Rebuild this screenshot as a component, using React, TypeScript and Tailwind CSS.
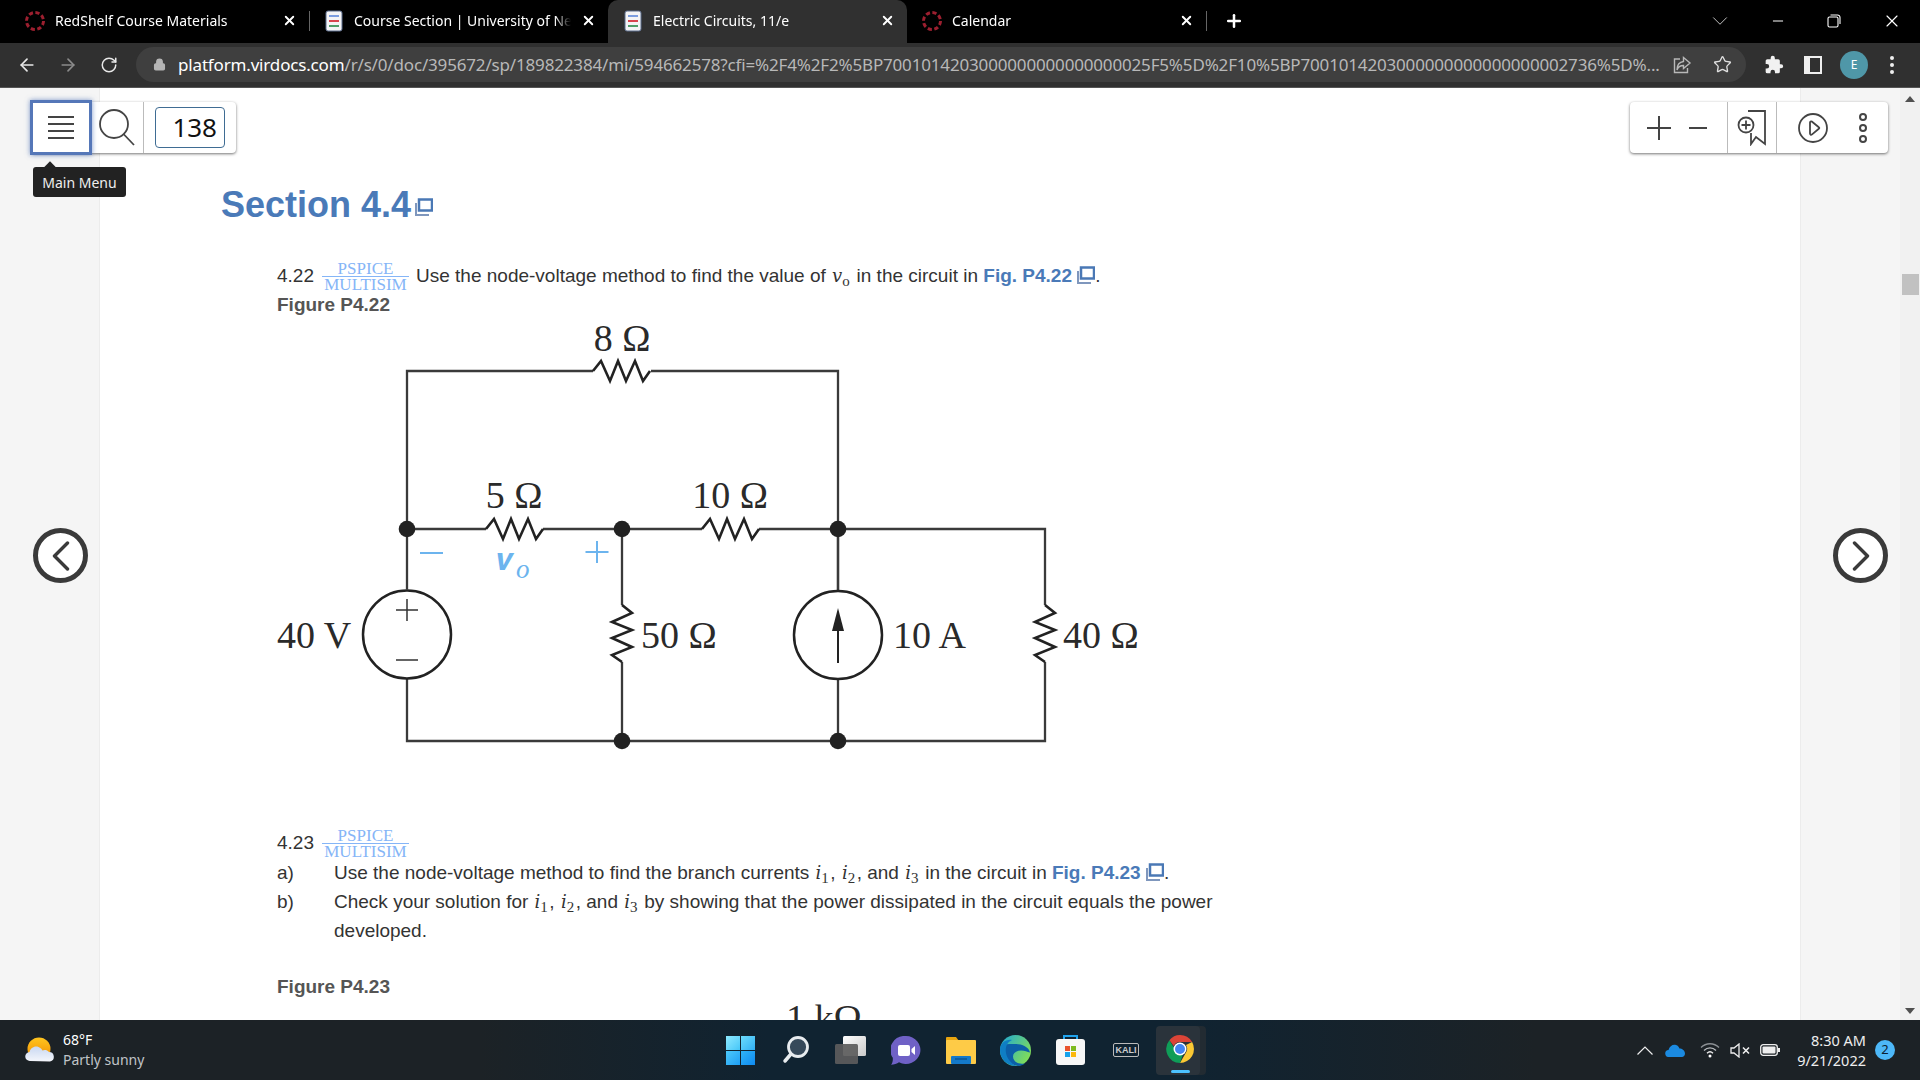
import type { ReactNode } from 'react';
import {
  ArrowLeft,
  ArrowRight,
  ChevronDown,
  Lock,
  Minus,
  Plus,
  RotateCw,
  Star,
  X,
} from 'lucide-react';

const CHROME_FONT = "font-['Noto_Sans',sans-serif]";
const READER_FONT = "font-['Liberation_Sans',Arial,sans-serif]";

function RedShelfIcon() {
  return (
    <svg width="22" height="22" viewBox="0 0 22 22" className="shrink-0">
      <circle cx="11" cy="11" r="8.5" fill="none" stroke="#9c1f2f" strokeWidth="3" strokeDasharray="4.2 2.5" />
    </svg>
  );
}

function DocIcon() {
  return (
    <svg width="18" height="22" viewBox="0 0 18 22" className="shrink-0">
      <rect x="1" y="1" width="16" height="20" rx="2" fill="#f4f4f6" stroke="#5b6c8c" />
      <rect x="4" y="5" width="10" height="2" fill="#7c9de0" />
      <rect x="4" y="10" width="10" height="2" fill="#d9434e" />
      <rect x="4" y="15" width="10" height="2" fill="#4f9d69" />
    </svg>
  );
}

function Tab({ title, icon, active, divider }: { title: string; icon: ReactNode; active?: boolean; divider?: boolean }) {
  return (
    <div
      className={[
        'relative flex h-full w-[299px] items-center pb-[2px] pl-[14px] pr-[12px]',
        active ? 'rounded-t-[10px] bg-[#303030]' : '',
      ].join(' ')}
    >
      <div className="flex w-[22px] shrink-0 justify-center">{icon}</div>
      <span className="ml-[9px] min-w-0 flex-1 overflow-hidden whitespace-nowrap text-[14px] text-white [mask-image:linear-gradient(to_left,transparent,black_16px)]">
        {title}
      </span>
      <X size={15} strokeWidth={3} className="ml-[10px] shrink-0 text-white" />
      {divider ? <div className="absolute -right-px top-[11px] h-[20px] w-px bg-[#666]" /> : null}
    </div>
  );
}

function TabBar() {
  return (
    <div className={`flex h-[43px] shrink-0 items-end bg-black ${CHROME_FONT}`}>
      <div className="flex h-[43px] pl-[10px]">
        <Tab title="RedShelf Course Materials" icon={<RedShelfIcon />} divider />
        <Tab title="Course Section | University of New Hampshire" icon={<DocIcon />} />
        <Tab title="Electric Circuits, 11/e" icon={<DocIcon />} active />
        <Tab title="Calendar" icon={<RedShelfIcon />} divider />
      </div>
      <div className="flex h-full flex-1 items-center pb-[2px] pl-[18px] pr-[18px] text-white">
        <Plus size={20} strokeWidth={3} />
        <ChevronDown size={26} strokeWidth={0.8} className="ml-auto text-[#ddd]" />
        <Minus size={16} strokeWidth={1.5} className="ml-[37px]" />
        <svg width="14" height="14" viewBox="0 0 14 14" className="ml-[41px]" fill="none" stroke="white" strokeWidth="1.1">
          <rect x="1" y="3" width="10" height="10" rx="1.5" />
          <path d="M3.5 1h7a2.5 2.5 0 0 1 2.5 2.5V10" />
        </svg>
        <X size={20} strokeWidth={1.4} className="ml-[41px]" />
      </div>
    </div>
  );
}

function AddressBar() {
  return (
    <div className={`flex h-[45px] shrink-0 items-center border-b border-[#555] bg-[#303030] pb-px ${CHROME_FONT}`}>
      <div className="flex items-center pl-[17px] text-[#e8e8e8]">
        <ArrowLeft size={20} strokeWidth={2} />
        <ArrowRight size={20} strokeWidth={2} className="ml-[21px] text-[#8b8b8b]" />
        <RotateCw size={18} strokeWidth={2} className="ml-[22px]" />
      </div>
      <div className="ml-[18px] flex h-[35px] w-[1610px] items-center rounded-full bg-[#3f3f3f] pl-[17px] pr-[14px]">
        <Lock size={13} strokeWidth={2.5} className="shrink-0 fill-[#b5b5b5] text-[#b5b5b5]" />
        <div className="ml-[12px] min-w-0 flex-1 overflow-hidden whitespace-nowrap text-[17px] tracking-[-0.165px] text-[#b8b8b8]">
          <span className="text-white">platform.virdocs.com</span>
          /r/s/0/doc/395672/sp/189822384/mi/594662578?cfi=%2F4%2F2%5BP7001014203000000000000000025F5%5D%2F10%5BP7001014203000000000000000002736%5D%...
        </div>
        <svg width="20" height="20" viewBox="0 0 20 20" className="ml-[12px] shrink-0" fill="none" stroke="#b8b8b8" strokeWidth="1.4">
          <path d="M8 4H2.5v13.5h13V13" />
          <path d="M11.5 2.5 18 8l-6.5 5.5V10.5C8 10.5 6 12 5 15c0-5 2.5-8 6.5-8.5z" />
        </svg>
        <Star size={19} strokeWidth={1.7} className="ml-[21px] shrink-0 text-[#e0e0e0]" />
      </div>
      <svg width="20" height="20" viewBox="0 0 24 24" className="ml-[18px] shrink-0" fill="#f1f1f1">
        <path d="M20.5 11H19V7a2 2 0 0 0-2-2h-4V3.5a2.5 2.5 0 0 0-5 0V5H4a2 2 0 0 0-2 2v3.8h1.5a2.7 2.7 0 0 1 0 5.4H2V20a2 2 0 0 0 2 2h3.8v-1.5a2.7 2.7 0 0 1 5.4 0V22H17a2 2 0 0 0 2-2v-4h1.5a2.5 2.5 0 0 0 0-5z" />
      </svg>
      <div className="ml-[20px] flex h-[18px] w-[18px] shrink-0 justify-end border-[2px] border-[#eee] bg-[#eee]">
        <div className="h-full w-[10px] bg-[#303030]" />
      </div>
      <div className="ml-[18px] flex h-[28px] w-[28px] shrink-0 items-center justify-center rounded-full bg-[#4f97a8] text-[12px] text-white">
        E
      </div>
      <div className="ml-[22px] flex flex-col gap-[3px]">
        <span className="h-[4px] w-[4px] rounded-full bg-[#eee]" />
        <span className="h-[4px] w-[4px] rounded-full bg-[#eee]" />
        <span className="h-[4px] w-[4px] rounded-full bg-[#eee]" />
      </div>
    </div>
  );
}

function LeftTools() {
  return (
    <div className="absolute left-[32px] top-[14px] flex h-[51px] w-[204px] rounded-[4px] bg-white shadow-[0_1px_3px_rgba(0,0,0,0.55)]">
      <div className="flex w-[58px] items-center justify-center outline-[3px] -outline-offset-1 outline-[#5577b8] [box-shadow:0_0_5px_2px_rgba(74,111,181,0.7)]">
        <div className="flex w-[26px] flex-col gap-[5px]">
          <span className="h-[2px] bg-[#444]" />
          <span className="h-[2px] bg-[#444]" />
          <span className="h-[2px] bg-[#444]" />
          <span className="h-[2px] bg-[#444]" />
        </div>
      </div>
      <div className="flex w-[54px] items-center justify-center border-r border-[#bbb]">
        <svg width="38" height="38" viewBox="0 0 38 38" fill="none" stroke="#444" strokeWidth="1.8">
          <circle cx="16" cy="15" r="14" />
          <path d="m25.5 25 10.5 11" />
        </svg>
      </div>
      <div className="ml-[11px] flex h-[41px] w-[70px] items-center justify-end self-center rounded-[4px] border border-[#3f6c93] pr-[7px] font-['Noto_Sans',sans-serif] text-[26px] text-[#111]">
        138
      </div>
    </div>
  );
}

function Tooltip() {
  return (
    <div className="absolute left-[33px] top-[79px] flex h-[30px] w-[93px] items-center justify-center rounded-[3px] bg-[#222] font-['Noto_Sans',sans-serif] text-[14px] text-[#eee]">
      <span className="absolute -top-[4px] left-[13px] h-[8px] w-[8px] rotate-45 bg-[#222]" />
      Main Menu
    </div>
  );
}

function RightTools() {
  return (
    <div className="absolute left-[1630px] top-[14px] flex h-[51px] w-[258px] rounded-[4px] bg-white text-[#444] shadow-[0_1px_3px_rgba(0,0,0,0.55)]">
      <div className="flex w-[98px] items-center border-r border-[#bbb] pl-[16px]">
        <svg width="26" height="26" viewBox="0 0 26 26" stroke="#444" strokeWidth="2">
          <path d="M13 1v24M1 13h24" />
        </svg>
        <svg width="18" height="4" viewBox="0 0 18 4" className="ml-[17px]" stroke="#444" strokeWidth="2">
          <path d="M0 2h18" />
        </svg>
      </div>
      <div className="flex w-[49px] items-center justify-center border-r border-[#bbb]">
        <svg width="30" height="36" viewBox="0 0 30 36" fill="none" stroke="#444" strokeWidth="1.8">
          <path d="M11 1h17v33l-9-7-5 7V23" />
          <circle cx="9" cy="15" r="7.5" fill="white" />
          <path d="M9 10.5v9M4.5 15h9" />
        </svg>
      </div>
      <div className="flex flex-1 items-center pl-[21px]">
        <svg width="30" height="30" viewBox="0 0 30 30" fill="none" stroke="#444" strokeWidth="1.8">
          <circle cx="15" cy="15" r="14" />
          <path d="M12 9.5c0-1 1-1.5 1.8-1l7 5.8c.7.5.7 1 0 1.5l-7 5.8c-.8.5-1.8 0-1.8-1z" />
        </svg>
        <div className="ml-[31px] flex flex-col gap-[3px]">
          <span className="h-[8px] w-[8px] rounded-full border-[2px] border-[#444]" />
          <span className="h-[8px] w-[8px] rounded-full border-[2px] border-[#444]" />
          <span className="h-[8px] w-[8px] rounded-full border-[2px] border-[#444]" />
        </div>
      </div>
    </div>
  );
}

function NavCircle({ side }: { side: 'left' | 'right' }) {
  return (
    <div
      className={[
        'absolute top-[440px] flex h-[55px] w-[55px] items-center justify-center rounded-full border-[5px] border-[#3a3a3a] bg-white',
        side === 'left' ? 'left-[33px]' : 'left-[1833px]',
      ].join(' ')}
    >
      <svg width="18" height="30" viewBox="0 0 18 30" fill="none" stroke="#3a3a3a" strokeWidth="3.4" strokeLinecap="round" strokeLinejoin="round">
        <path d={side === 'left' ? 'M15.5 2 2.5 15l13 13' : 'M2.5 2l13 13-13 13'} />
      </svg>
    </div>
  );
}

function ExternalIcon({ size = 18 }: { size?: number }) {
  return (
    <svg width={size} height={size} viewBox="0 0 18 18" className="inline-block align-[-2px]">
      <path d="M1 5v12h13" fill="none" stroke="#7f97bd" strokeWidth="2" />
      <rect x="4" y="1.5" width="13" height="11" fill="none" stroke="#4a78b5" strokeWidth="2.5" />
    </svg>
  );
}

function Multisim() {
  return (
    <span className="ml-[8px] mr-[7px] inline-flex w-[87px] flex-col items-center font-['Liberation_Serif',serif] text-[17px] leading-[15px] text-[#85b5f7]">
      <span className="w-full border-b border-[#85b5f7] text-center">PSPICE</span>
      <span>MULTISIM</span>
    </span>
  );
}

function MathVar({ name, sub }: { name: string; sub?: string }) {
  return (
    <span className="pl-[1px] pr-[1.5px] font-['DejaVu_Serif',serif] leading-none text-[#333]">
      <i className="text-[18px] leading-none">{name}</i>
      {sub ? <sub className="font-['Liberation_Serif',serif] text-[15px]">{sub}</sub> : null}
    </span>
  );
}

function Resistor({ x, y, vertical }: { x: number; y: number; vertical?: boolean }) {
  // zigzag is 57px long, drawn from its start point
  const pts = [0, 8, 17, 25, 33, 42, 50, 57];
  const off = [0, -10, 10, -10, 10, -10, 10, 0];
  const points = pts
    .map((p, i) => (vertical ? `${x - off[i]},${y + p}` : `${x + p},${y + off[i]}`))
    .join(' ');
  return <polyline points={points} fill="none" stroke="#222" strokeWidth="2.6" />;
}

function Dot({ x, y }: { x: number; y: number }) {
  return <circle cx={x} cy={y} r="8.3" fill="#222" />;
}

function CircuitLabel({ x, y, children, anchor }: { x: number; y: number; children: string; anchor?: 'middle' }) {
  return (
    <text x={x} y={y} textAnchor={anchor} fontSize="38" fontFamily="'Liberation Serif', serif" fill="#2a2a2a">
      {children}
    </text>
  );
}

function Circuit() {
  return (
    <svg width="880" height="430" viewBox="277 320 880 430" className="block">
      <g fill="none" stroke="#3a3a3a" strokeWidth="2.3">
        <path d="M593 371H407V589.5" />
        <path d="M651 371H838V590" />
        <path d="M407 529H486M543 529H702M759 529H1045V605M1045 662V741H407V679" />
        <path d="M622 529V605M622 662V741M838 529V590M838 680V741" />
      </g>
      <Resistor x={593} y={371} />
      <Resistor x={486} y={529} />
      <Resistor x={702} y={529} />
      <Resistor x={622} y={605} vertical />
      <Resistor x={1045} y={605} vertical />
      <Dot x={407} y={529} />
      <Dot x={622} y={529} />
      <Dot x={838} y={529} />
      <Dot x={622} y={741} />
      <Dot x={838} y={741} />
      <circle cx="407" cy="634.5" r="44" fill="white" stroke="#222" strokeWidth="2.5" />
      <path d="M407 599v22M396 610h22M396 660h22" stroke="#333" strokeWidth="1.5" />
      <circle cx="838" cy="635" r="44" fill="white" stroke="#222" strokeWidth="2.5" />
      <path d="M838 630v33" stroke="#222" strokeWidth="2" />
      <path d="m838 608 6 23h-12z" fill="#222" />
      <path d="M420 553h23" stroke="#6cb4ee" strokeWidth="2" />
      <path d="M597 541v22M585.5 552h23" stroke="#6cb4ee" strokeWidth="2" />
      <text x="497" y="570" fontSize="32" fontFamily="'DejaVu Serif', serif" fill="#6cb4ee">
        𝒗
      </text>
      <text x="516" y="578" fontSize="27" fontStyle="italic" fontFamily="'Liberation Serif', serif" fill="#6cb4ee">
        o
      </text>
      <CircuitLabel x={622} y={351} anchor="middle">8 Ω</CircuitLabel>
      <CircuitLabel x={514} y={508} anchor="middle">5 Ω</CircuitLabel>
      <CircuitLabel x={730} y={508} anchor="middle">10 Ω</CircuitLabel>
      <CircuitLabel x={277} y={648}>40 V</CircuitLabel>
      <CircuitLabel x={641} y={648}>50 Ω</CircuitLabel>
      <CircuitLabel x={893} y={648}>10 A</CircuitLabel>
      <CircuitLabel x={1063} y={648}>40 Ω</CircuitLabel>
    </svg>
  );
}

function ReaderPage() {
  return (
    <div className={`h-full overflow-hidden bg-white pl-[121px] ${READER_FONT}`}>
      <h2 className="pt-[92px] text-[36px] font-bold leading-[44px] text-[#4a7ab8]">
        Section 4.4
        <span className="ml-[4px] inline-block align-[3px]">
          <ExternalIcon />
        </span>
      </h2>
      <div className="pl-[56px] text-[19px] text-[#333]">
        <div className="mt-[33px] flex h-[32px] items-center">
          <span>4.22</span>
          <Multisim />
          <span>
            Use the node-voltage method to find the value of <MathVar name="v" sub="o" /> in the circuit in{' '}
            <b className="text-[#4a7ab8]">Fig. P4.22</b> <ExternalIcon />.
          </span>
        </div>
        <p className="mb-[3px] h-[25px] font-bold leading-[25px] text-[#555]">Figure P4.22</p>
        <Circuit />
        <div className="mt-[77px] flex h-[32px] items-center">
          <span>4.23</span>
          <Multisim />
        </div>
        <div className="-mt-px grid grid-cols-[57px_1fr] leading-[29px]">
          <span>a)</span>
          <span>
            Use the node-voltage method to find the branch currents <MathVar name="i" sub="1" />, <MathVar name="i" sub="2" />, and{' '}
            <MathVar name="i" sub="3" /> in the circuit in <b className="text-[#4a7ab8]">Fig. P4.23</b> <ExternalIcon />.
          </span>
          <span>b)</span>
          <span className="w-[930px]">
            Check your solution for <MathVar name="i" sub="1" />, <MathVar name="i" sub="2" />, and <MathVar name="i" sub="3" /> by
            showing that the power dissipated in the circuit equals the power developed.
          </span>
        </div>
        <p className="mt-[28px] font-bold leading-[28px] text-[#555]">Figure P4.23</p>
        <p className="-mt-[3px] ml-[509px] font-['Liberation_Serif',serif] text-[38px] leading-[40px] text-[#2a2a2a]">1 kΩ</p>
      </div>
    </div>
  );
}

function Scrollbar() {
  return (
    <div className="flex h-full w-[20px] shrink-0 flex-col items-center bg-[#f1f1f1]">
      <span className="mt-[8px] h-0 w-0 border-x-[5px] border-b-[6px] border-x-transparent border-b-[#505050]" />
      <div className="mt-[172px] h-[21px] w-[17px] bg-[#c1c1c1]" />
      <span className="mt-auto mb-[6px] h-0 w-0 border-x-[5px] border-t-[6px] border-x-transparent border-t-[#505050]" />
    </div>
  );
}

function WeatherIcon() {
  return (
    <svg width="30" height="26" viewBox="0 0 30 26">
      <defs>
        <linearGradient id="sun" x1="0" y1="0" x2="0" y2="1">
          <stop offset="0" stopColor="#ffc51f" />
          <stop offset="1" stopColor="#f08a00" />
        </linearGradient>
        <linearGradient id="cloud" x1="0" y1="0" x2="0" y2="1">
          <stop offset="0" stopColor="#c9d8f2" />
          <stop offset="1" stopColor="#f4f6fb" />
        </linearGradient>
      </defs>
      <circle cx="14" cy="12" r="11.5" fill="url(#sun)" />
      <path d="M5 24a4.5 4.5 0 0 1-.5-9c1-4 5-6.5 9-5 2 .8 3.3 2 4 3.5 1.2-1 5-1 6.5 1.5a4.8 4.8 0 0 1 1 9.5z" fill="url(#cloud)" />
    </svg>
  );
}

function CenterIcons() {
  return (
    <div className="absolute left-[726px] top-0 flex h-full items-center">
      <div className="grid h-[29px] w-[29px] grid-cols-2 gap-[1px]">
        <span className="bg-linear-to-br from-[#8ceaff] to-[#43c6f8]" />
        <span className="bg-linear-to-br from-[#6bdcfc] to-[#2fb0f5]" />
        <span className="bg-linear-to-br from-[#4cc8fa] to-[#1c9ef4]" />
        <span className="bg-linear-to-br from-[#2fb4f8] to-[#0f8af0]" />
      </div>
      <svg width="28" height="28" viewBox="0 0 28 28" className="ml-[27px]">
        <circle cx="16" cy="11" r="9.5" fill="#36495a" stroke="#e8ecef" strokeWidth="2.8" />
        <path d="m9 18-6 7" stroke="#e8ecef" strokeWidth="3.5" strokeLinecap="round" />
      </svg>
      <svg width="31" height="28" viewBox="0 0 31 28" className="ml-[25px]">
        <rect x="8" y="0" width="23" height="20" rx="1.5" fill="url(#tv1)" />
        <rect x="0" y="8" width="23" height="20" rx="1.5" fill="#5c5c5c" fillOpacity="0.92" />
        <defs>
          <linearGradient id="tv1" x1="0" y1="0" x2="1" y2="1">
            <stop offset="0" stopColor="#fff" />
            <stop offset="1" stopColor="#c9c9c9" />
          </linearGradient>
        </defs>
      </svg>
      <svg width="30" height="29" viewBox="0 0 30 29" className="ml-[25px]">
        <path d="M15 0a14.5 14 0 1 1-7 26.3c-2 1.5-5 2.5-8 2.5 1.5-1.5 2-3.8 1.8-7A14.5 14 0 0 1 15 0z" fill="#6f61c6" />
        <rect x="7" y="9" width="12" height="11" rx="2" fill="#fff" />
        <path d="m20.5 13 3.5-3v9l-3.5-3z" fill="#fff" />
      </svg>
      <svg width="30" height="28" viewBox="0 0 30 28" className="ml-[25px]">
        <path d="M0 2a1 1 0 0 1 1-1h9l3 4h-13z" fill="#e8a510" />
        <rect x="0" y="4" width="30" height="24" rx="1" fill="#fecb47" />
        <rect x="5" y="20" width="20" height="8" rx="1" fill="#1479c9" />
        <path d="M9 23h12" stroke="#0c4f8a" strokeWidth="1.3" />
      </svg>
      <svg width="31" height="31" viewBox="0 0 31 31" className="ml-[24px]">
        <defs>
          <linearGradient id="edgeA" x1="0" y1="0" x2="1" y2="0.6">
            <stop offset="0" stopColor="#1ba6d9" />
            <stop offset="1" stopColor="#7fdc5a" />
          </linearGradient>
        </defs>
        <circle cx="15.5" cy="15.5" r="15.5" fill="url(#edgeA)" />
        <path d="M2 10C3 20 9 30 18 31c3 0 5-1 7-2.5-8 1.5-12-3-12-7 0-4 4-6 8-6 4 0 6 1.5 9 2C29 12 22 9 16 9 9 9 4 9 2 10z" fill="#0c5fa8" />
        <path d="M0 15C0 8 6 4 12 5 7 7 5 12 6 18c1 6 6 11 10 13C7 31 0 24 0 15z" fill="#0f7ec4" />
      </svg>
      <svg width="29" height="30" viewBox="0 0 29 30" className="ml-[25px]">
        <path d="M8 5V1h13v4" fill="none" stroke="#21a4ee" strokeWidth="2" />
        <rect x="0" y="4" width="29" height="26" rx="3" fill="#f7f7f7" />
        <rect x="9" y="11" width="5" height="5" fill="#e9532d" />
        <rect x="15" y="11" width="5" height="5" fill="#7dba1f" />
        <rect x="9" y="17" width="5" height="5" fill="#16a2ec" />
        <rect x="15" y="17" width="5" height="5" fill="#fbb80d" />
      </svg>
      <div className="ml-[28px] flex h-[14px] w-[26px] items-center justify-center rounded-[2px] border-[1.5px] border-[#bbb] font-['Liberation_Sans',sans-serif] text-[9px] font-bold leading-none text-[#ccc]">
        KALI
      </div>
      <div className="relative ml-[17px] flex h-[49px] w-[44px] items-center justify-center rounded-[4px] bg-[#2a333b] pl-[4px] shadow-[6px_0_0_#222b32]">
        <svg width="28" height="28" viewBox="0 0 28 28" className="-mt-[2px]">
          <path d="M14 0a14 14 0 0 1 12.1 7H14a7 7 0 0 0-6.3 4L3.4 5.2A14 14 0 0 1 14 0z" fill="#db4437" />
          <path d="M26.1 7A14 14 0 0 1 14 28l6-10.5A7 7 0 0 0 20 10z" fill="#fcc934" />
          <path d="M3.4 5.2 9 14.5a7 7 0 0 0 8.5 3L14 28A14 14 0 0 1 3.4 5.2z" fill="#0f9d58" />
          <circle cx="14" cy="14" r="6.5" fill="white" />
          <circle cx="14" cy="14" r="5" fill="#4285f4" />
        </svg>
        <span className="absolute bottom-[2px] left-[15px] h-[3px] w-[19px] rounded-full bg-[#4cc2ff]" />
      </div>
    </div>
  );
}

function Tray() {
  return (
    <div className="ml-auto flex items-center pr-[25px] text-white">
      <svg width="16" height="9" viewBox="0 0 16 9" fill="none" stroke="#eee" strokeWidth="1.2">
        <path d="m.5 8.5 7.500-7.500 7.500 7.500" />
      </svg>
      <svg width="20" height="13" viewBox="0 0 20 13" className="ml-[12px]">
        <path d="M4 13a3.5 3.5 0 0 1-.5-7C4.5 2 8 0 11 1c2 .6 3 2 3.5 3.5C17 4.5 20 6.5 20 9.5c0 2-1.5 3.5-3 3.5z" fill="#1b8ae0" />
      </svg>
      <svg width="20" height="16" viewBox="0 0 20 16" className="ml-[15px]" fill="none" stroke="#8a8f93" strokeWidth="1.3">
        <path d="M1 5.5c5-5 13-5 18 0" />
        <path d="M4 8.5c3.5-3.5 8.5-3.5 12 0" stroke="#b7bbbe" />
        <path d="M7 11.3c1.8-1.8 4.2-1.8 6 0" stroke="#eee" />
        <circle cx="10" cy="14" r="1.5" fill="#fff" stroke="none" />
      </svg>
      <svg width="20" height="15" viewBox="0 0 20 15" className="ml-[10px]" fill="none" stroke="#eee" strokeWidth="1.3">
        <path d="M1 5h3l5-4v13l-5-4H1z" />
        <path d="m13 4.5 6 6m0-6-6 6" strokeWidth="1.6" />
      </svg>
      <svg width="20" height="12" viewBox="0 0 20 12" className="ml-[10px]">
        <rect x="0.7" y="0.7" width="16.6" height="10.6" rx="2.5" fill="none" stroke="#eee" strokeWidth="1.3" />
        <rect x="2.5" y="2.5" width="13" height="7" rx="1" fill="#eee" />
        <rect x="18" y="4" width="2" height="4" fill="#eee" />
      </svg>
      <div className="ml-[17px] text-right text-[14.5px] leading-[20px] text-[#eee]">
        <div>8:30 AM</div>
        <div>9/21/2022</div>
      </div>
      <div className="ml-[9px] flex h-[20px] w-[20px] items-center justify-center rounded-full bg-[#4db8f8] text-[13px] text-[#0b2233]">
        2
      </div>
    </div>
  );
}

function Taskbar() {
  return (
    <div className={`relative flex h-[60px] shrink-0 items-center bg-[linear-gradient(90deg,#1c2226_0%,#1c2226_25%,#102331_40%,#102331_62%,#1c2226_80%)] pl-[25px] ${CHROME_FONT}`}>
      <WeatherIcon />
      <div className="ml-[8px] text-[14px] leading-[20px]">
        <div className="text-white">68°F</div>
        <div className="text-[#c0c4c8]">Partly sunny</div>
      </div>
      <CenterIcons />
      <Tray />
    </div>
  );
}

export default function App() {
  return (
    <div className="flex h-screen w-screen flex-col overflow-hidden">
      <TabBar />
      <AddressBar />
      <div className="relative flex min-h-0 flex-1">
        <div className="w-[100px] shrink-0 border-r border-[#ececec] bg-[#f5f5f5]" />
        <div className="min-w-0 flex-1">
          <ReaderPage />
        </div>
        <div className="w-[100px] shrink-0 border-l border-[#ececec] bg-[#f5f5f5]" />
        <Scrollbar />
        <LeftTools />
        <Tooltip />
        <RightTools />
        <NavCircle side="left" />
        <NavCircle side="right" />
      </div>
      <Taskbar />
    </div>
  );
}
